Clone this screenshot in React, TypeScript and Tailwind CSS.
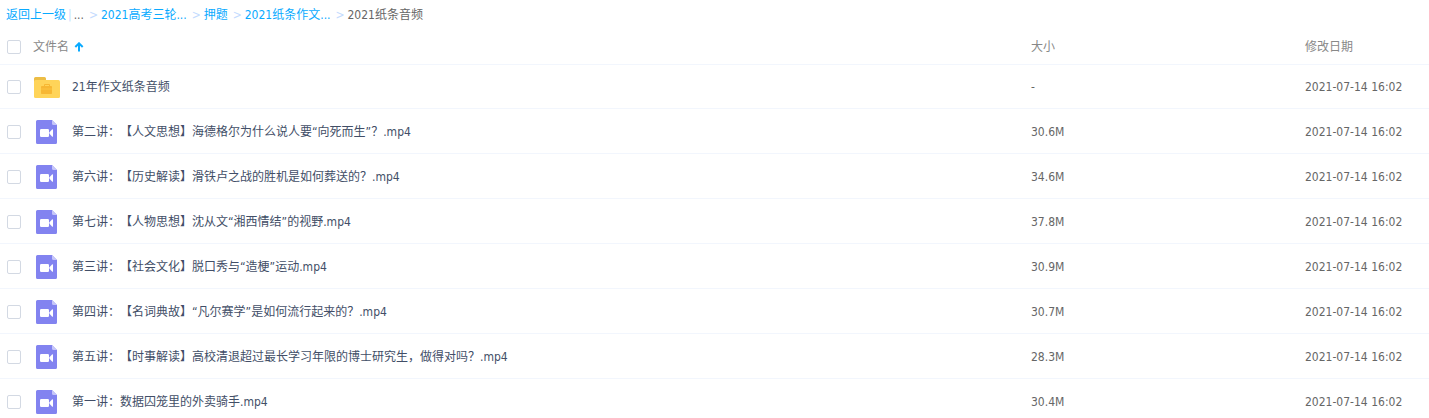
import { Fragment } from "react";

const UPDATED = "2021-07-14 16:02";

type FileItem = {
  name: string;
  size: string;
  type: "folder" | "video";
};

const files: FileItem[] = [
  { name: "21年作文纸条音频", size: "-", type: "folder" },
  { name: "第二讲：【人文思想】海德格尔为什么说人要“向死而生”？.mp4", size: "30.6M", type: "video" },
  { name: "第六讲：【历史解读】滑铁卢之战的胜机是如何葬送的？.mp4", size: "34.6M", type: "video" },
  { name: "第七讲：【人物思想】沈从文“湘西情结”的视野.mp4", size: "37.8M", type: "video" },
  { name: "第三讲：【社会文化】脱口秀与“造梗”运动.mp4", size: "30.9M", type: "video" },
  { name: "第四讲：【名词典故】“凡尔赛学”是如何流行起来的？.mp4", size: "30.7M", type: "video" },
  { name: "第五讲：【时事解读】高校清退超过最长学习年限的博士研究生，做得对吗？.mp4", size: "28.3M", type: "video" },
  { name: "第一讲：数据囚笼里的外卖骑手.mp4", size: "30.4M", type: "video" },
];

const crumbs = ["2021高考三轮...", "押题", "2021纸条作文..."];

function FolderIcon() {
  return (
    <svg className="h-[21px] w-[26px]" viewBox="0 0 26 21" aria-hidden="true">
      <path d="M0 5V1.5A1.5 1.5 0 0 1 1.5 0h9A1.5 1.5 0 0 1 12 1.5V5z" fill="#ecbd45" />
      <rect y="3" width="26" height="18" rx="1.5" fill="#ffd459" />
      <path d="M10.500 9.500V7.500h5v2" fill="none" stroke="#f7b733" strokeWidth="1" />
      <rect x="7" y="9" width="11" height="8" rx="0.8" fill="#f7b733" />
      <path d="M7 12h11" stroke="#fcc846" strokeWidth="0.8" />
    </svg>
  );
}

function VideoIcon() {
  return (
    <svg className="h-6 w-[21px]" viewBox="0 0 21 24" aria-hidden="true">
      <path d="M1.5 0H16l5 5v17.5a1.5 1.5 0 0 1-1.5 1.5h-18A1.5 1.5 0 0 1 0 22.5v-21A1.5 1.5 0 0 1 1.5 0z" fill="#8283f0" />
      <path d="M16 0l5 5h-3.5A1.5 1.5 0 0 1 16 3.5z" fill="#c6c6f9" />
      <rect x="4" y="9" width="9" height="8" rx="1.2" fill="#fff" />
      <path d="M13.500 12.200L16 9.400q1-.7 1 .4v6.400q0 1.100-1 .4l-2.500-2.800z" fill="#fff" />
    </svg>
  );
}

function Checkbox({ label }: { label: string }) {
  return (
    <input
      type="checkbox"
      aria-label={label}
      className="block size-[14px] shrink-0 appearance-none rounded-[2px] border border-[#d3d9e3] bg-white checked:bg-[#09aaff]"
    />
  );
}

export default function App() {
  return (
    <main className="bg-white font-['DejaVu_Sans_Condensed','Noto_Sans','Noto_Sans_CJK_SC',sans-serif] text-xs text-[#666] [text-spacing-trim:space-all]">
      {/* Breadcrumb */}
      <nav aria-label="路径" className="flex h-7 items-center gap-[5px] pt-0.5 pl-[6px]">
        <div className="flex items-center gap-0.5">
          <a href="#" className="text-[#09aaff]">返回上一级</a>
          <span className="text-[#c4dbfe]">|</span>
          <span>...</span>
        </div>
        {crumbs.map((crumb) => (
          <Fragment key={crumb}>
            <span className="w-[7px] text-[#c4dbfe]">&gt;</span>
            <a href="#" className="text-[#09aaff]">{crumb}</a>
          </Fragment>
        ))}
        <span className="w-[7px] text-[#c4dbfe]">&gt;</span>
        <span>2021纸条音频</span>
      </nav>

      {/* File list */}
      <table className="w-full table-fixed border-collapse text-left">
        <thead>
          <tr className="h-9 border-b border-[#f2f6fd] text-[#888]">
            <th className="p-0 pt-0.5 font-normal">
              <div className="flex items-center pl-[7px]">
                <Checkbox label="全选" />
                <button type="button" className="ml-3 flex items-center gap-[5px]">
                  文件名
                  <svg className="h-[10px] w-[10px]" viewBox="0 0 10 10" aria-hidden="true">
                    <path d="M5 9.5V1.5M1.3 5L5 1.3 8.7 5" fill="none" stroke="#09aaff" strokeWidth="2" />
                  </svg>
                </button>
              </div>
            </th>
            <th className="w-[274px] p-0 pt-0.5 font-normal">大小</th>
            <th className="w-[124px] p-0 pt-0.5 font-normal">修改日期</th>
          </tr>
        </thead>
        <tbody>
          {files.map((file) => (
            <tr key={file.name} className="h-[45px] border-b border-[#f2f6fd] first:h-11">
              <td className="p-0 pt-0.5">
                <div className="flex items-center pl-[7px]">
                  <Checkbox label={file.name} />
                  <div className="ml-3 flex w-[27px] shrink-0 justify-center">
                    {file.type === "folder" ? <FolderIcon /> : <VideoIcon />}
                  </div>
                  <a href="#" className="ml-3 truncate text-[#424e67]">{file.name}</a>
                </div>
              </td>
              <td className="p-0 pt-0.5">{file.size}</td>
              <td className="p-0 pt-0.5 whitespace-nowrap">{UPDATED}</td>
            </tr>
          ))}
        </tbody>
      </table>
    </main>
  );
}
